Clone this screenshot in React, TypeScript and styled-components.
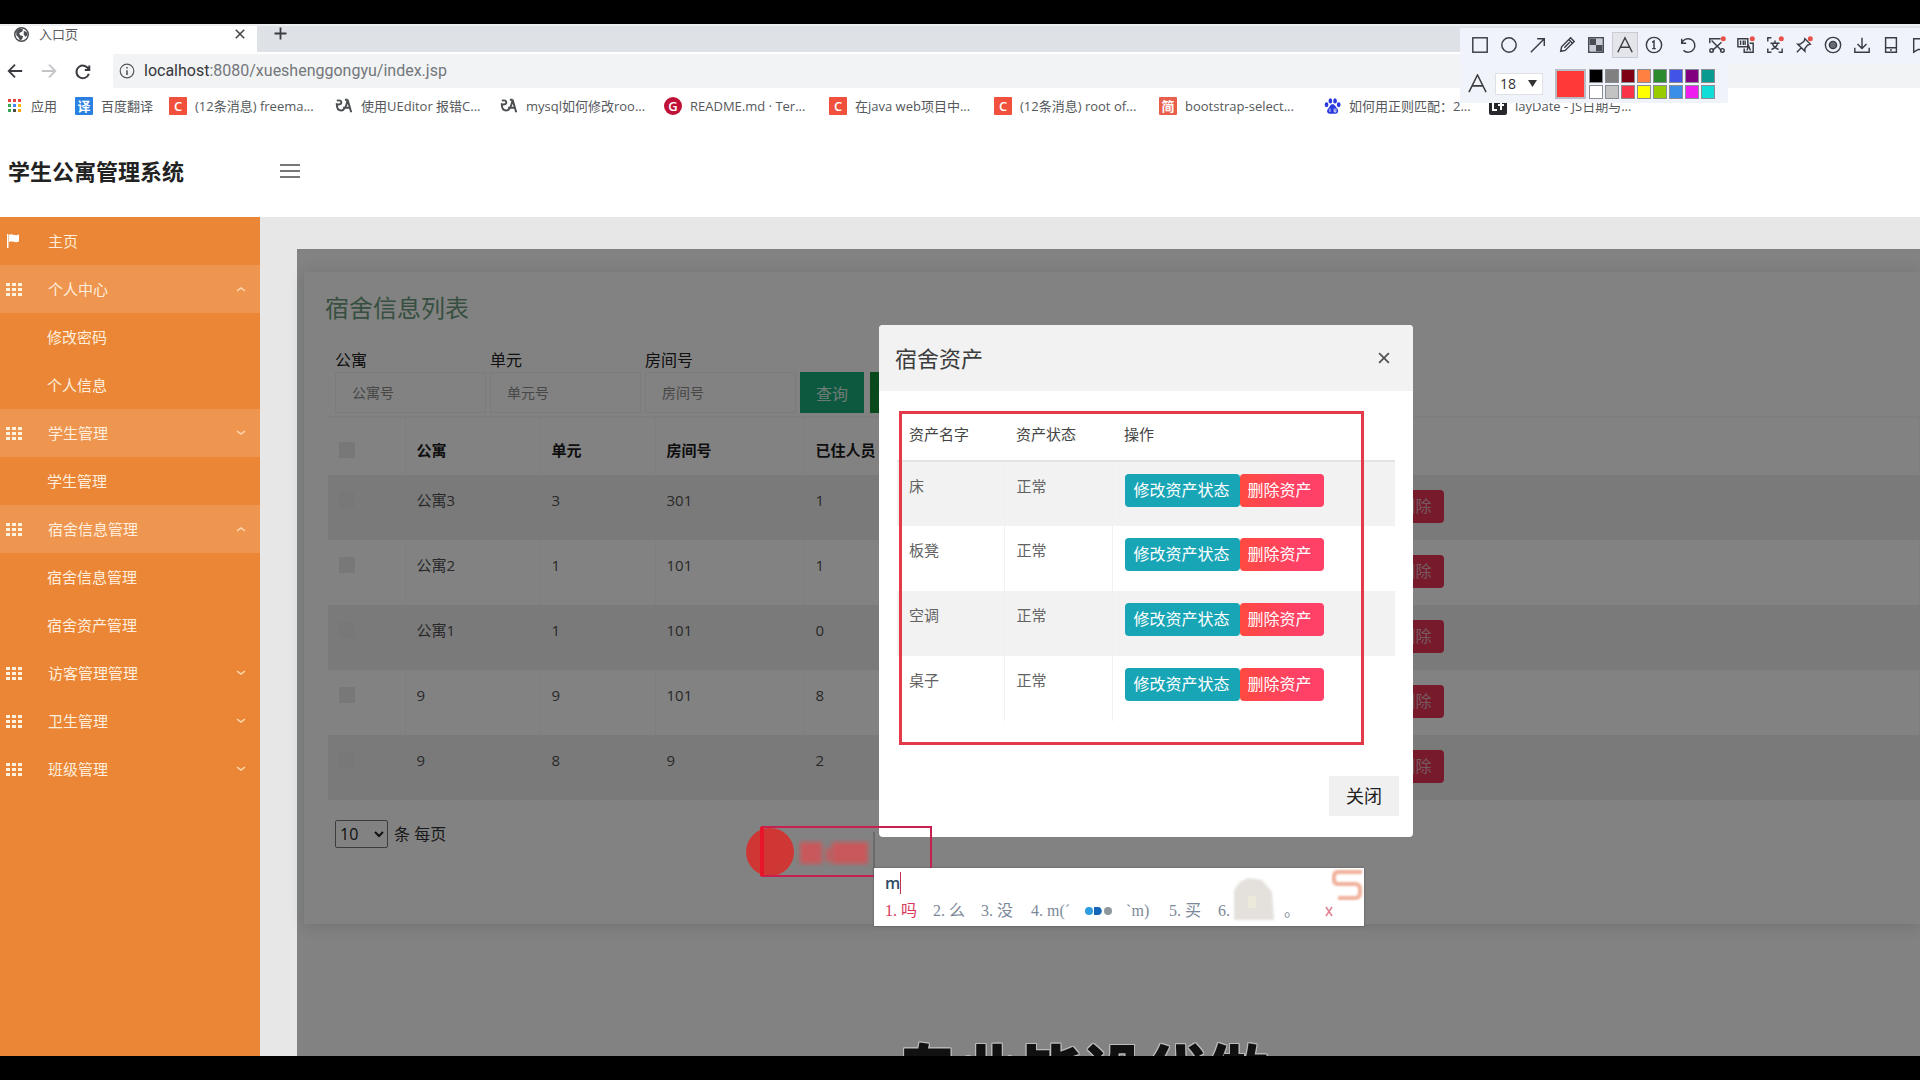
import React from "react";
import styled, { createGlobalStyle } from "styled-components";

const GlobalStyle = createGlobalStyle`
  * { box-sizing: border-box; }
  body {
    margin: 0;
    background: #000;
    color: #333;
    font-family: "Open Sans", "Noto Sans CJK SC", sans-serif;
    font-size: 15px;
  }
  button, input, select { font-family: inherit; }
  button { cursor: pointer; border: 0; padding: 0; background: none; }
`;

/* ---------- screen ---------- */

const Screen = styled.div`
  height: 100vh;
  padding: 24px 0;
  background: #000;
`;

const Stage = styled.div`
  position: relative;
  height: 100%;
  display: flex;
  flex-direction: column;
  overflow: hidden;
  background: #fff;
`;

/* ---------- browser chrome ---------- */

const TabStrip = styled.div`
  display: flex;
  height: 28px;
  background: #dee1e6;
  border-top: 2px solid #eceef0;
`;

const Tab = styled.div`
  display: flex;
  align-items: center;
  width: 257px;
  padding: 0 10px 10px 14px;
  background: #fff;
  font-size: 13px;
  line-height: 16px;
  color: #5a5c60;
`;

const TabTitle = styled.span`
  flex: 1;
  margin-left: 10px;
`;

const TabButton = styled.button`
  display: flex;
  align-items: center;
  justify-content: center;
  width: 14px;
  height: 16px;
`;

const NewTab = styled.button`
  display: flex;
  padding: 0 0 0 16px;
`;

const NavBar = styled.div`
  display: flex;
  align-items: center;
  height: 36px;
  padding: 2px 0 0 6px;
`;

const NavButton = styled.button`
  display: flex;
  align-items: center;
  justify-content: center;
  width: 18px;
  height: 18px;
  margin-right: 16px;
`;

const Omnibox = styled.label`
  display: flex;
  flex: 1;
  align-items: center;
  gap: 9px;
  height: 34px;
  margin-left: 5px;
  padding-left: 6px;
  background: #f1f3f4;
`;

const Url = styled.span`
  font-family: Roboto, sans-serif;
  font-size: 16px;
  line-height: 20px;
  color: #74777b;
  b { font-weight: 400; color: #36383b; }
`;

const Bookmarks = styled.nav`
  display: flex;
  align-items: center;
  height: 36px;
  padding-left: 7px;
  overflow: hidden;
`;

const Bookmark = styled.a<{ $width: number }>`
  display: flex;
  flex: none;
  align-items: center;
  gap: 8px;
  width: ${(p) => p.$width}px;
  font-size: 13px;
  line-height: 18px;
  color: #55585c;
  text-decoration: none;
  white-space: nowrap;
`;

const Badge = styled.span<{ $bg: string; $round?: boolean }>`
  display: flex;
  align-items: center;
  justify-content: center;
  width: 18px;
  height: 18px;
  border-radius: ${(p) => (p.$round ? "9px" : "1px")};
  background: ${(p) => p.$bg};
  color: #fff;
  font-size: 13px;
  font-weight: 600;
  line-height: 18px;
`;

/* ---------- page header and sidebar ---------- */

const PageHeader = styled.header`
  display: flex;
  align-items: center;
  height: 93px;
  padding-left: 8px;
`;

const Brand = styled.h1`
  width: 272px;
  margin: 0;
  font-size: 22px;
  line-height: 32px;
  font-weight: 700;
  color: #222;
`;

const Burger = styled.button`
  display: flex;
`;

const Body = styled.div`
  display: flex;
  flex: 1;
  min-height: 0;
`;

const Sidebar = styled.nav`
  flex: none;
  width: 260px;
  background: #ea8635;
`;

const SideLink = styled.a<{ $open?: boolean; $sub?: boolean }>`
  display: flex;
  align-items: center;
  height: 48px;
  padding: 0 14px 0 ${(p) => (p.$sub ? "47px" : "6px")};
  background: ${(p) => (p.$open ? "#ee9550" : "transparent")};
  color: #ffeedd;
  font-size: 15px;
  line-height: 20px;
  text-decoration: none;
  svg { flex: none; }
`;

const SideLabel = styled.span`
  flex: 1;
  margin-left: 26px;
`;

/* ---------- content frame ---------- */

const Main = styled.main`
  flex: 1;
  min-width: 0;
  padding: 32px 0 0 37px;
  background: #e7e7e7;
`;

const Frame = styled.div`
  position: relative;
  height: 100%;
  padding: 23px 0 0 7px;
  background: #fff;
`;

const Card = styled.section`
  padding: 20px 0 76px 24px;
  background: #fff;
  box-shadow: 0 2px 14px rgba(0, 40, 30, 0.16);
`;

const CardTitle = styled.h2`
  margin: 0 0 24px -3px;
  font-size: 24px;
  line-height: 32px;
  font-weight: 400;
  color: #6c9c7e;
`;

const Filters = styled.form`
  display: flex;
  align-items: flex-end;
  gap: 4px;
  margin: 0 0 3px 7px;
`;

const Field = styled.label`
  display: flex;
  flex-direction: column;
  width: 151px;
  font-size: 16px;
  line-height: 24px;
  color: #222;
`;

const FieldInput = styled.input`
  width: 100%;
  height: 41px;
  padding: 0 16px;
  border: 1px solid #f4f4f4;
  background: #fff;
  font-size: 14px;
  &::placeholder { color: #8c8c8c; }
`;

const FilterButton = styled.button<{ $bg: string }>`
  width: 64px;
  height: 41px;
  margin-right: 2px;
  background: ${(p) => p.$bg};
  color: #d8efe6;
  font-size: 16px;
`;

const RoomTable = styled.table`
  width: 100%;
  table-layout: fixed;
  border-collapse: collapse;
  color: #505050;
  font-size: 15px;
  line-height: 20px;
  text-align: left;
  th {
    height: 58px;
    padding: 22px 11px 0;
    border-top: 2px solid #f8f8f8;
    border-right: 1px solid #f8f8f8;
    color: #1c1c1c;
    vertical-align: top;
    white-space: nowrap;
  }
  td {
    height: 65px;
    padding: 15px 11px 0;
    border-right: 1px solid #f8f8f8;
    vertical-align: top;
  }
  tbody tr:nth-child(odd) td { background: #f0f0f0; border-color: #f0f0f0; }
`;

const Col = styled.col<{ $width?: number }>`
  width: ${(p) => (p.$width ? `${p.$width}px` : "auto")};
`;

const Check = styled.input`
  appearance: none;
  width: 16px;
  height: 16px;
  margin: 2px 0;
  background: #ebebeb;
`;

const SmallButton = styled.button<{ $bg: string }>`
  display: block;
  height: 33px;
  padding: 0 9px 0 8px;
  border-radius: 4px;
  background: ${(p) => p.$bg};
  color: #fff;
  font-size: 16px;
  line-height: 33px;
`;

const DeleteRoom = styled(SmallButton)`
  padding: 0 12px;
  color: #e8b0bb;
`;

const Pager = styled.label`
  display: flex;
  align-items: center;
  gap: 6px;
  margin: 20px 0 0 7px;
  font-size: 16px;
  line-height: 28px;
  color: #333;
`;

const PageSize = styled.select`
  width: 53px;
  height: 28px;
  border: 1px solid #777;
  border-radius: 2px;
  background: #fff;
  color: #222;
  font-size: 16px;
`;

const Backdrop = styled.div`
  position: absolute;
  inset: 0;
  background: rgba(0, 0, 0, 0.49);
`;

/* ---------- modal ---------- */

const Modal = styled.section`
  position: absolute;
  top: 76px;
  left: 582px;
  width: 534px;
  border-radius: 4px;
  background: #fff;
`;

const ModalHeader = styled.header`
  display: flex;
  align-items: center;
  justify-content: space-between;
  height: 66px;
  padding: 0 22px 0 16px;
  border-radius: 4px 4px 0 0;
  background: #f2f2f2;
`;

const ModalTitle = styled.h3`
  margin: 0;
  font-size: 22px;
  line-height: 30px;
  font-weight: 400;
  color: #3c3c3c;
`;

const ModalBody = styled.div`
  position: relative;
  padding: 20px 18px 0;
`;

const AssetTable = styled.table`
  width: 100%;
  table-layout: fixed;
  border-collapse: collapse;
  color: #626262;
  font-size: 15px;
  line-height: 24px;
  text-align: left;
  th {
    height: 50px;
    padding: 0 12px 4px;
    border-bottom: 2px solid #e4e4e4;
    color: #444;
    font-weight: 400;
  }
  td {
    height: 65px;
    padding: 12px 12px 0;
    border-right: 1px solid #f0f0f0;
    vertical-align: top;
  }
  td:last-child { border-right: 0; }
  tbody tr:nth-child(odd) td { background: #f2f2f2; }
`;

const ButtonPair = styled.div`
  display: flex;
  button:first-child { padding: 0 10px 0 9px; }
  button:last-child { padding: 0 12px 0 8px; }
`;

const ModalFooter = styled.footer`
  display: flex;
  justify-content: flex-end;
  padding: 55px 14px 21px;
`;

const CloseButton = styled.button`
  width: 70px;
  height: 40px;
  padding-bottom: 2px;
  background: #f0f0f0;
  color: #222;
  font-size: 18px;
`;

const RedBox = styled.div`
  position: absolute;
  top: 20px;
  left: 20px;
  width: 465px;
  height: 334px;
  border: 3px solid #e23a48;
`;

/* ---------- screenshot tool overlays ---------- */

const Marker = styled.svg`
  position: absolute;
  top: 796px;
  left: 740px;
`;

const Tools = styled.aside`
  position: absolute;
  top: 4px;
  right: 0;
  width: 460px;
`;

const ToolRow = styled.div`
  display: flex;
  gap: 3px;
  height: 36px;
  padding: 4px 0 0 7px;
  overflow: hidden;
  background: #f1f3fc;
`;

const Tool = styled.button<{ $active?: boolean; $spaced?: boolean }>`
  display: flex;
  flex: none;
  align-items: center;
  justify-content: center;
  width: 26px;
  height: 26px;
  margin-left: ${(p) => (p.$spaced ? "5px" : "0")};
  border: 1px solid ${(p) => (p.$active ? "#c9ccd4" : "transparent")};
  background: ${(p) => (p.$active ? "#e3e5eb" : "transparent")};
`;

const StyleRow = styled.div`
  display: flex;
  align-items: center;
  width: 268px;
  height: 39px;
  padding-left: 8px;
  background: #f1f3fa;
`;

const FontBox = styled.span`
  position: relative;
  display: flex;
  align-items: center;
  margin: 0 12px 0 8px;
  svg { position: absolute; right: 6px; pointer-events: none; }
`;

const FontSize = styled.select`
  appearance: none;
  width: 48px;
  height: 22px;
  padding: 0 4px;
  border: 1px solid #dfe1e6;
  border-radius: 0;
  background: #fff;
  color: #333;
  font-size: 14px;
`;

const Current = styled.span`
  width: 31px;
  height: 30px;
  margin-right: 3px;
  border: 2px solid #b9bcc4;
  background: #ff3838;
`;

const Palette = styled.div`
  display: grid;
  grid-template-columns: repeat(8, 14px);
  gap: 2px;
`;

const Swatch = styled.button<{ $color: string }>`
  height: 14px;
  border: 1px solid #8b8d94;
  background: ${(p) => p.$color};
`;

/* ---------- input method window ---------- */

const Ime = styled.div`
  position: absolute;
  top: 844px;
  left: 874px;
  width: 490px;
  height: 58px;
  padding: 4px 0 0 11px;
  background: #fff;
  box-shadow: 0 0 2px #555;
`;

const Typed = styled.div`
  width: 16px;
  border-right: 1px solid #c0304c;
  color: #2d4c63;
  font-size: 16px;
  line-height: 22px;
  font-weight: 600;
`;

const Candidates = styled.ol`
  display: flex;
  align-items: center;
  margin: 6px 0 0;
  padding: 0;
  list-style: none;
  color: #7c8899;
  font-family: "Liberation Serif", "Noto Sans CJK SC", serif;
  font-size: 16px;
  line-height: 22px;
  white-space: nowrap;
`;

const Candidate = styled.li<{ $width: number; $first?: boolean }>`
  display: flex;
  align-items: center;
  gap: 4px;
  width: ${(p) => p.$width}px;
  color: ${(p) => (p.$first ? "#d6385a" : "inherit")};
`;

const ImeArt = styled.svg`
  position: absolute;
  top: 0;
  right: 0;
`;

const Caption = styled.p`
  position: absolute;
  bottom: -52px;
  left: 896px;
  margin: 0;
  color: #111;
  font-size: 62px;
  line-height: 70px;
  font-weight: 900;
  white-space: nowrap;
  text-shadow: 1px 0 #bbb, -1px 0 #bbb, 0 1px #bbb, 0 -1px #bbb, 1px 1px #bbb, -1px -1px #bbb, 1px -1px #bbb, -1px 1px #bbb;
`;

/* ---------- icons ---------- */

type StrokeProps = { size?: number; color?: string; width?: number; children: React.ReactNode };

const Stroke = ({ size = 20, color = "#3a3c42", width = 1.5, children }: StrokeProps) => (
  <svg width={size} height={size} viewBox="0 0 20 20" fill="none" stroke={color} strokeWidth={width} aria-hidden="true">
    {children}
  </svg>
);

const Cross = ({ size = 12, color = "#444" }) => (
  <Stroke size={size} color={color} width={2.6}>
    <path d="M3 3l14 14M17 3L3 17" />
  </Stroke>
);

const Globe = () => (
  <svg width="15" height="15" viewBox="0 0 20 20" aria-hidden="true">
    <circle cx="10" cy="10" r="9" fill="#fff" stroke="#4b4e52" strokeWidth="2" />
    <path d="M3 5l5-3 4 1-1 3-4 2 1 3 4 1-1 4-3 2-2-4-3-3zM13 5l4 2 1 4-3 2-2-3z" fill="#4b4e52" />
  </svg>
);

const Grid = () => (
  <svg width="16" height="13" viewBox="0 0 16 13" fill="#fff3e0" aria-hidden="true">
    {[0, 5, 10].map((y) => [0, 6, 12].map((x) => <rect key={`${x}-${y}`} x={x} y={y} width="4" height="3" />))}
  </svg>
);

const Flag = () => (
  <svg width="16" height="16" viewBox="0 0 16 16" fill="#fff" aria-hidden="true">
    <path d="M1 1h1.500v14H1zM3 2c3-2 5 1 8 0l2-.5v7c-4 2-6-1-10 .5z" />
  </svg>
);

const Caret = ({ up = false }) => (
  <svg width="10" height="6" viewBox="0 0 10 6" fill="none" stroke="#ffd9b0" strokeWidth="1.500" aria-hidden="true">
    <path d={up ? "M1 5l4-3 4 3" : "M1 1l4 3 4-3"} />
  </svg>
);

const Apps = () => (
  <svg width="16" height="16" viewBox="0 0 16 16" aria-hidden="true">
    {["#e8453c", "#e8453c", "#e8453c", "#34a853", "#4285f4", "#fbbc05", "#34a853", "#4a4a4a", "#f2a40c"].map((c, i) => (
      <rect key={i} x={1 + (i % 3) * 5} y={1 + Math.floor(i / 3) * 5} width="3" height="3" fill={c} />
    ))}
  </svg>
);

const Article = () => (
  <Stroke size={18} color="#4c4f52" width={2.2}>
    <path d="M2 4q5-1 5 2t-5 2q0 7 5 7 5 0 7-12l4 14M9 12h7M14 3h-3" />
  </Stroke>
);

const Paw = () => (
  <svg width="17" height="18" viewBox="0 0 20 20" fill="#2a38e0" aria-hidden="true">
    <ellipse cx="3" cy="8.500" rx="2.200" ry="2.900" />
    <ellipse cx="7.500" cy="4" rx="2.200" ry="3" />
    <ellipse cx="13" cy="4" rx="2.200" ry="3" />
    <ellipse cx="17.300" cy="8.500" rx="2.200" ry="2.900" />
    <path d="M10 8c3 0 3.500 3 5.500 5s1.500 6-2 6H7c-4 0-4-4-2-6s2-5 5-5z" />
    <path d="M7 13v4M12 13v4h2v-4" stroke="#fff" fill="none" />
  </svg>
);

const LayIcon = () => (
  <svg width="18" height="18" viewBox="0 0 18 18" aria-hidden="true">
    <rect width="18" height="18" rx="2" fill="#26282c" />
    <path d="M4 4v9h4M12 4v9M9 8h6" stroke="#fff" strokeWidth="2" fill="none" />
  </svg>
);

const dot = <circle cx="17" cy="3" r="2.800" fill="#e8514a" stroke="none" />;

const tools: { name: string; art: React.ReactNode; active?: boolean; spaced?: boolean }[] = [
  { name: "矩形", art: <rect x="2" y="2" width="16" height="16" /> },
  { name: "椭圆", art: <circle cx="10" cy="10" r="8" /> },
  { name: "箭头", art: <path d="M2 18L17 3M9 3h8v8" /> },
  { name: "画笔", art: <path d="M3 17l1-5L14 2l4 4L8 16zM12 4l4 4M7 13l6-6" /> },
  {
    name: "马赛克",
    art: (
      <>
        <rect x="2" y="2" width="16" height="16" />
        <path d="M3 10h7v7H3zM10 3h7v7h-7z" fill="#c9ccd6" stroke="none" />
        <path d="M3 3h7v7H3zM10 10h7v7h-7z" fill="#4a4c54" stroke="none" />
      </>
    ),
  },
  { name: "文字", active: true, art: <path d="M2 18L10 2l8 16M5 12.500h10" /> },
  { name: "序号", art: <><circle cx="10" cy="10" r="8.500" /><path d="M8 7l2-1.500V14M8 14h4" /></> },
  { name: "撤销", spaced: true, art: <path d="M3 3v5h5M3 8a7.500 7.500 0 1 1 2 8" /> },
  { name: "裁剪", art: <><path d="M2 8V3h12M4 5l11 11M15 7L5 16" /><circle cx="4" cy="16" r="2" /><circle cx="16" cy="16" r="2" />{dot}</> },
  { name: "翻译", art: <><path d="M1 3h11v9H1zM4 5v5M7 5v5M9 5v5M8 14v4h10V8h-4M11 16l2-5 2 5" />{dot}</> },
  { name: "识别文字", art: <><path d="M2 6V2h4M14 18h4v-4M6 18H2v-4M5 8h10M10 5v3M7 8c1 4 4 6 7 7M13 8c-1 4-4 6-7 7" />{dot}</> },
  { name: "贴图", art: <><path d="M11 3l6 6-3 1-3 4v3l-8-8h3l4-3zM7 13l-5 5" />{dot}</> },
  { name: "录制", art: <><circle cx="10" cy="10" r="8.500" /><circle cx="10" cy="10" r="4" fill="#6a6c74" /></> },
  { name: "保存", art: <path d="M10 2v11M5 9l5 5 5-5M2 13v5h16v-5" /> },
  { name: "手机", art: <path d="M4 2h12v16H4zM4 13h12M9 15.500h2" /> },
  { name: "收藏", art: <path d="M3 18V3h14v12H8z" /> },
];

/* ---------- data ---------- */

const bookmarks: { label: string; width: number; icon: React.ReactNode }[] = [
  { label: "应用", width: 68, icon: <Apps /> },
  { label: "百度翻译", width: 94, icon: <Badge $bg="#2a80e0">译</Badge> },
  { label: "(12条消息) freema...", width: 166, icon: <Badge $bg="#f0503c">C</Badge> },
  { label: "使用UEditor 报错C...", width: 165, icon: <Article /> },
  { label: "mysql如何修改roo...", width: 164, icon: <Article /> },
  { label: "README.md · Ter...", width: 165, icon: <Badge $bg="#c01238" $round>G</Badge> },
  { label: "在java web项目中...", width: 165, icon: <Badge $bg="#f0503c">C</Badge> },
  { label: "(12条消息) root of...", width: 165, icon: <Badge $bg="#f0503c">C</Badge> },
  { label: "bootstrap-select...", width: 165, icon: <Badge $bg="#e8604c">简</Badge> },
  { label: "如何用正则匹配：2...", width: 165, icon: <Paw /> },
  { label: "layDate - JS日期与...", width: 165, icon: <LayIcon /> },
];

const menu: { label: string; sub?: boolean; open?: boolean; home?: boolean }[] = [
  { label: "主页", home: true },
  { label: "个人中心", open: true },
  { label: "修改密码", sub: true },
  { label: "个人信息", sub: true },
  { label: "学生管理", open: true },
  { label: "学生管理", sub: true },
  { label: "宿舍信息管理", open: true },
  { label: "宿舍信息管理", sub: true },
  { label: "宿舍资产管理", sub: true },
  { label: "访客管理管理" },
  { label: "卫生管理" },
  { label: "班级管理" },
];

const rooms = [
  ["公寓3", "3", "301", "1"],
  ["公寓2", "1", "101", "1"],
  ["公寓1", "1", "101", "0"],
  ["9", "9", "101", "8"],
  ["9", "8", "9", "2"],
];

const filters = [
  ["公寓", "公寓号"],
  ["单元", "单元号"],
  ["房间号", "房间号"],
];

const assets = ["床", "板凳", "空调", "桌子"];

const palette = [
  "#000000", "#808080", "#7f0014", "#ff8040", "#2b8a2b", "#4254e8", "#800080", "#0b9a90",
  "#ffffff", "#c3c3c3", "#fa3448", "#ffff00", "#99cc00", "#3a8ee6", "#ee1cee", "#10dcd8",
];

/* ---------- parts ---------- */

const Chrome = () => (
  <>
    <TabStrip>
      <Tab>
        <Globe />
        <TabTitle>入口页</TabTitle>
        <TabButton aria-label="关闭标签页"><Cross /></TabButton>
      </Tab>
      <NewTab aria-label="新标签页">
        <Stroke size={15} width={2.400}><path d="M10 2v16M2 10h16" /></Stroke>
      </NewTab>
    </TabStrip>
    <NavBar>
      <NavButton aria-label="后退"><Stroke size={18} width={2}><path d="M18 10H3M10 3l-7 7 7 7" /></Stroke></NavButton>
      <NavButton aria-label="前进"><Stroke size={18} width={2} color="#c2c4c8"><path d="M2 10h15M10 3l7 7-7 7" /></Stroke></NavButton>
      <NavButton aria-label="刷新"><Stroke size={18} width={2.200}><path d="M17 4v5h-5M16.500 9a7 7 0 1 0 0 4" /></Stroke></NavButton>
      <Omnibox>
        <Stroke size={16} color="#55585c"><circle cx="10" cy="10" r="8.500" /><path d="M10 9v6M10 5v2" strokeWidth="2" /></Stroke>
        <Url><b>localhost</b>:8080/xueshenggongyu/index.jsp</Url>
      </Omnibox>
    </NavBar>
    <Bookmarks>
      {bookmarks.map((b, i) => (
        <Bookmark key={i} href="#" $width={b.width}>{b.icon}{b.label}</Bookmark>
      ))}
    </Bookmarks>
  </>
);

const SideMenu = () => (
  <Sidebar>
    {menu.map((m, i) => (
      <SideLink key={i} href="#" $open={m.open} $sub={m.sub}>
        {m.sub ? m.label : (
          <>
            {m.home ? <Flag /> : <Grid />}
            <SideLabel>{m.label}</SideLabel>
            {!m.home && <Caret up={m.open && i !== 4} />}
          </>
        )}
      </SideLink>
    ))}
  </Sidebar>
);

const RoomCard = () => (
  <Card>
    <CardTitle>宿舍信息列表</CardTitle>
    <Filters>
      {filters.map(([label, hint]) => (
        <Field key={label}>{label}<FieldInput placeholder={hint} /></Field>
      ))}
      <FilterButton type="button" $bg="#18ae7c">查询</FilterButton>
      <FilterButton type="button" $bg="#149038" aria-label="添加" />
    </Filters>
    <RoomTable>
      <colgroup>
        <Col $width={77} /><Col $width={135} /><Col $width={115} /><Col $width={149} /><Col $width={572} /><Col />
      </colgroup>
      <thead>
        <tr>
          <th><Check type="checkbox" aria-label="全选" /></th>
          <th>公寓</th><th>单元</th><th>房间号</th><th>已住人员</th><th />
        </tr>
      </thead>
      <tbody>
        {rooms.map((r, i) => (
          <tr key={i}>
            <td><Check type="checkbox" aria-label="选择" /></td>
            {r.map((v, j) => <td key={j}>{v}</td>)}
            <td><DeleteRoom $bg="#e83456">删除</DeleteRoom></td>
          </tr>
        ))}
      </tbody>
    </RoomTable>
    <Pager>
      <PageSize defaultValue="10"><option>10</option></PageSize>
      条 每页
    </Pager>
  </Card>
);

const AssetModal = () => (
  <Modal role="dialog" aria-label="宿舍资产">
    <ModalHeader>
      <ModalTitle>宿舍资产</ModalTitle>
      <TabButton aria-label="关闭"><Cross size={14} color="#555" /></TabButton>
    </ModalHeader>
    <ModalBody>
      <AssetTable>
        <colgroup><Col $width={107} /><Col $width={108} /><Col /></colgroup>
        <thead><tr><th>资产名字</th><th>资产状态</th><th>操作</th></tr></thead>
        <tbody>
          {assets.map((a) => (
            <tr key={a}>
              <td>{a}</td>
              <td>正常</td>
              <td>
                <ButtonPair>
                  <SmallButton $bg="#18a5b6">修改资产状态</SmallButton>
                  <SmallButton $bg="linear-gradient(90deg, #ff4a40, #ff4168 70%)">删除资产</SmallButton>
                </ButtonPair>
              </td>
            </tr>
          ))}
        </tbody>
      </AssetTable>
      <RedBox />
    </ModalBody>
    <ModalFooter><CloseButton>关闭</CloseButton></ModalFooter>
  </Modal>
);

const MarkerArt = () => (
  <Marker width="200" height="64" viewBox="0 0 200 64" aria-hidden="true">
    <defs><filter id="soft"><feGaussianBlur stdDeviation="2" /></filter></defs>
    <circle cx="30" cy="32" r="24" fill="#cf3734" />
    <g filter="url(#soft)" fill="#c8595c">
      <rect x="60" y="22" width="22" height="22" />
      <rect x="86" y="28" width="5" height="14" />
      <rect x="92" y="22" width="36" height="22" />
    </g>
    <path d="M134 56H22V7h169v42" fill="none" stroke="#c8204e" strokeWidth="2" />
    <path d="M22 7v49" stroke="#e8142c" strokeWidth="4" />
    <path d="M134 12v44" stroke="#555" strokeWidth="1" />
  </Marker>
);

const ScreenshotTools = () => (
  <Tools>
    <ToolRow>
      {tools.map((t) => (
        <Tool key={t.name} aria-label={t.name} $active={t.active} $spaced={t.spaced}>
          <Stroke size={18} width={1.600}>{t.art}</Stroke>
        </Tool>
      ))}
    </ToolRow>
    <StyleRow>
      <Stroke size={19} width={1.600}><path d="M1 19L10 1l9 18M4.500 12.500h11" /></Stroke>
      <FontBox>
        <FontSize aria-label="字号" defaultValue="18"><option>18</option></FontSize>
        <svg width="9" height="7" viewBox="0 0 9 7" fill="#333" aria-hidden="true"><path d="M0 0h9L4.500 7z" /></svg>
      </FontBox>
      <Current />
      <Palette>
        {palette.map((c) => <Swatch key={c} $color={c} aria-label={c} />)}
      </Palette>
    </StyleRow>
  </Tools>
);

const ImeWindow = () => (
  <Ime>
    <Typed>m</Typed>
    <Candidates>
      <Candidate $width={48} $first>1.<span>吗</span></Candidate>
      <Candidate $width={48}>2.<span>么</span></Candidate>
      <Candidate $width={50}>3.<span>没</span></Candidate>
      <Candidate $width={138}>
        4.<span>m(´</span>
        <svg width="48" height="12" viewBox="0 0 48 12" aria-hidden="true">
          <circle cx="15" cy="6" r="4" fill="#2f9be0" />
          <path d="M20 2h4c5 0 5 8 0 8h-4z" fill="#1566b8" />
          <circle cx="34" cy="6" r="4" fill="#8d979c" />
        </svg>
        <span>`m)</span>
      </Candidate>
      <Candidate $width={49}>5.<span>买</span></Candidate>
      <Candidate $width={66}>6.</Candidate>
      <li>。</li>
    </Candidates>
    <ImeArt width="140" height="58" viewBox="0 0 140 58" aria-hidden="true">
      <defs><filter id="haze"><feGaussianBlur stdDeviation="1" /></filter></defs>
      <path d="M10 52V22l6-8 8-4 14 2 10 12 2 28z" fill="#e4e1dd" filter="url(#haze)" />
      <path d="M24 28h8v12h-8z" fill="#ece8da" />
      <g fill="none" stroke="#f0b09a" strokeWidth="4" filter="url(#haze)">
        <path d="M138 4h-24q-4 0-4 5v3q0 4 5 4h16q5 0 5 5v4q0 5-5 5h-17" />
      </g>
      <path d="M102 39l6 9M108 39l-6 9" stroke="#e08090" strokeWidth="1.500" />
    </ImeArt>
  </Ime>
);

export default function App() {
  return (
    <Screen>
      <GlobalStyle />
      <Stage>
        <Chrome />
        <PageHeader>
          <Brand>学生公寓管理系统</Brand>
          <Burger aria-label="菜单">
            <svg width="20" height="16" viewBox="0 0 20 16" stroke="#777" strokeWidth="2" aria-hidden="true">
              <path d="M0 2h20M0 8h20M0 14h20" />
            </svg>
          </Burger>
        </PageHeader>
        <Body>
          <SideMenu />
          <Main>
            <Frame>
              <RoomCard />
              <Backdrop />
              <AssetModal />
            </Frame>
          </Main>
        </Body>
        <MarkerArt />
        <ImeWindow />
        <ScreenshotTools />
        <Caption>专业毕设代做</Caption>
      </Stage>
    </Screen>
  );
}
